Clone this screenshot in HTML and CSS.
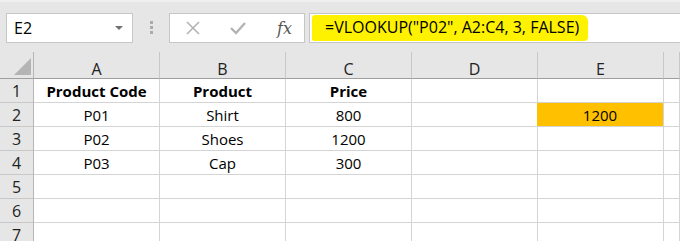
FILE: index.html
```html
<!DOCTYPE html>
<html lang="en">
<head>
  <meta charset="UTF-8">
  <title>VLOOKUP example</title>
  <link rel="stylesheet" href="styles.css">
</head>
<body>
  <div class="formula-bar">
    <div class="name-box">
      <span>E2</span>
      <span class="caret"></span>
    </div>
    <div class="grip">
      <i></i><i></i><i></i>
    </div>
    <div class="buttons">
      <svg class="btn" width="16" height="16" viewBox="0 0 16 16">
        <path d="M2 2 L14 14 M14 2 L2 14" stroke="#b3b3b3" stroke-width="1.6" fill="none"/>
      </svg>
      <svg class="btn" width="18" height="16" viewBox="0 0 18 16">
        <path d="M2 8 L7 13 L16 3" stroke="#b3b3b3" stroke-width="2.4" fill="none"/>
      </svg>
      <span class="fx">fx</span>
    </div>
    <div class="formula">
      <span class="marker">=VLOOKUP("P02", A2:C4, 3, FALSE)</span>
    </div>
  </div>

  <div class="sheet">
    <div class="corner"><span class="tri"></span></div>
    <div class="col-head">A</div>
    <div class="col-head">B</div>
    <div class="col-head">C</div>
    <div class="col-head">D</div>
    <div class="col-head">E</div>
    <div class="col-head"></div>

    <div class="row-head">1</div>
    <div class="cell bold">Product Code</div>
    <div class="cell bold">Product</div>
    <div class="cell bold">Price</div>
    <div class="cell"></div>
    <div class="cell"></div>
    <div class="cell"></div>

    <div class="row-head">2</div>
    <div class="cell">P01</div>
    <div class="cell">Shirt</div>
    <div class="cell">800</div>
    <div class="cell"></div>
    <div class="cell result">1200</div>
    <div class="cell"></div>

    <div class="row-head">3</div>
    <div class="cell">P02</div>
    <div class="cell">Shoes</div>
    <div class="cell">1200</div>
    <div class="cell"></div>
    <div class="cell"></div>
    <div class="cell"></div>

    <div class="row-head">4</div>
    <div class="cell">P03</div>
    <div class="cell">Cap</div>
    <div class="cell">300</div>
    <div class="cell"></div>
    <div class="cell"></div>
    <div class="cell"></div>

    <div class="row-head">5</div>
    <div class="cell"></div>
    <div class="cell"></div>
    <div class="cell"></div>
    <div class="cell"></div>
    <div class="cell"></div>
    <div class="cell"></div>

    <div class="row-head">6</div>
    <div class="cell"></div>
    <div class="cell"></div>
    <div class="cell"></div>
    <div class="cell"></div>
    <div class="cell"></div>
    <div class="cell"></div>

    <div class="row-head">7</div>
    <div class="cell"></div>
    <div class="cell"></div>
    <div class="cell"></div>
    <div class="cell"></div>
    <div class="cell"></div>
    <div class="cell"></div>
  </div>
</body>
</html>
```

FILE: styles.css
```css
body {
  margin: 0;
  font-family: "Open Sans", sans-serif;
  font-size: 15px;
  color: #000;
  background: #fff;
  overflow: hidden;
}
.formula-bar {
  display: flex;
  align-items: flex-start;
  height: 52px;
  box-sizing: border-box;
  padding: 11px 0 0 6px;
  background: #e6e6e6;
  border-top: 2px solid #efefef;
}
.name-box {
  display: flex;
  align-items: center;
  justify-content: space-between;
  width: 127px;
  height: 30px;
  box-sizing: border-box;
  padding: 0 9px 0 7px;
  font-size: 16px;
  background: #fff;
  border: 1px solid #c6c6c6;
}
.caret {
  width: 0;
  height: 0;
  border-left: 4px solid transparent;
  border-right: 4px solid transparent;
  border-top: 4px solid #707070;
}
.grip {
  display: flex;
  flex-direction: column;
  gap: 2px;
  margin: 8px 16px 0 17px;
}
.grip i {
  width: 3px;
  height: 3px;
  background: #ababab;
}
.buttons {
  display: flex;
  align-items: center;
  width: 136px;
  height: 30px;
  box-sizing: border-box;
  padding: 0 0 0 15px;
  gap: 28px;
  background: #fff;
  border: 1px solid #c6c6c6;
}
.fx {
  font-family: "DejaVu Serif", serif;
  font-style: italic;
  font-size: 16px;
  color: #555;
  margin-left: 2px;
}
.formula {
  flex: 1;
  display: flex;
  align-items: center;
  height: 30px;
  box-sizing: border-box;
  margin-left: 4px;
  padding-left: 2px;
  background: #fff;
  border: 1px solid #c6c6c6;
  border-right: none;
}
.marker {
  background: #fff200;
  font-size: 16px;
  padding: 2px 9px 3px 13px;
  border-radius: 3px 6px 4px 2px;
  line-height: 21px;
}
.sheet {
  display: grid;
  grid-template-columns: 34px repeat(5, 126px) 1fr;
  grid-template-rows: 27px repeat(7, 24px);
}
.sheet > div {
  box-sizing: border-box;
  display: flex;
  align-items: center;
  justify-content: center;
  border-right: 1px solid #d4d4d4;
  border-bottom: 1px solid #d4d4d4;
}
.sheet .corner {
  background: #e6e6e6;
  border-right: 1px solid #b5b5b5;
  border-bottom: 1px solid #9e9e9e;
  align-items: flex-end;
  justify-content: flex-end;
  padding: 0 2px 3px 0;
}
.tri {
  width: 0;
  height: 0;
  border-left: 17px solid transparent;
  border-bottom: 17px solid #b4b4b4;
}
.sheet .col-head {
  background: #e6e6e6;
  border-right: 1px solid #c8c8c8;
  border-bottom: 1px solid #9e9e9e;
  padding-top: 8px;
  font-size: 16px;
  color: #222;
}
.sheet .row-head {
  background: #e6e6e6;
  border-right: 1px solid #b5b5b5;
  border-bottom: 1px solid #c8c8c8;
  font-size: 16px;
  color: #222;
}
.bold {
  font-weight: 700;
}
.sheet .result {
  background: #ffc000;
  margin-left: -1px;
}
```
